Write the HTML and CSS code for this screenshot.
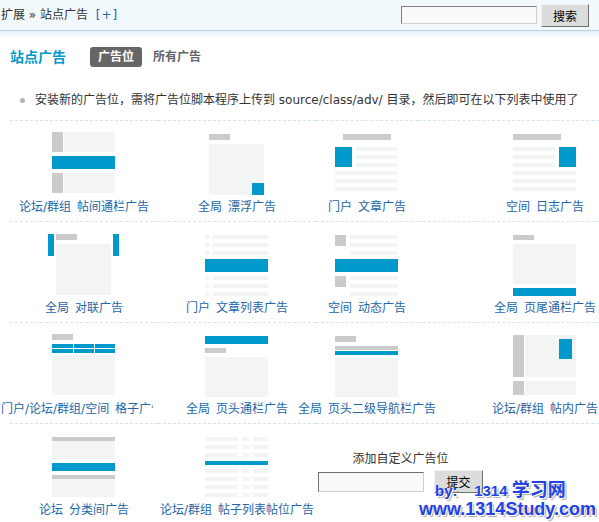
FILE: index.html
```html
<!DOCTYPE html>
<html lang="zh-CN">
<head>
<meta charset="utf-8">
<title>站点广告</title>
<link rel="stylesheet" href="styles.css">
</head>
<body>
<div class="topbar">
  <div class="crumb">扩展 » 站点广告 <a class="crumb-add">[+]</a></div>
  <form class="search">
    <input class="search-input" type="text">
    <button class="search-btn" type="button">搜索</button>
  </form>
</div>
<div class="topshade"></div>
<div class="main">
  <div class="head">
    <h3 class="title">站点广告</h3>
    <ul class="tabs">
      <li class="tab tab-current">广告位</li>
      <li class="tab">所有广告</li>
    </ul>
  </div>
  <ul class="tips">
    <li>安装新的广告位，需将广告位脚本程序上传到 source/class/adv/ 目录，然后即可在以下列表中使用了</li>
  </ul>
  <div class="types">
    <!-- row 1 -->
    <div class="cell">
      <svg class="icon" viewBox="-4 0 72 64"><rect class="g" x="0" y="0" width="11" height="20"/><rect class="l" x="12" y="0" width="51" height="20"/><rect class="b" x="0" y="24" width="63" height="13"/><rect class="g" x="0" y="41" width="11" height="20"/><rect class="l" x="12" y="41" width="51" height="20"/></svg>
      <a class="label">论坛/群组 帖间通栏广告</a>
    </div>
    <div class="cell">
      <svg class="icon" viewBox="-4 0 72 64"><rect class="g" x="4" y="2" width="21" height="6"/><rect class="l" x="4" y="12" width="55" height="51"/><rect class="b" x="47" y="51" width="12" height="12"/></svg>
      <a class="label">全局 漂浮广告</a>
    </div>
    <div class="cell">
      <svg class="icon" viewBox="-4 0 72 64"><rect class="g" x="8" y="2" width="48" height="6"/><rect class="b" x="0" y="15" width="17" height="20"/><rect class="l" x="21" y="15" width="42" height="4"/><rect class="l" x="21" y="23" width="42" height="4"/><rect class="l" x="21" y="31" width="42" height="4"/><rect class="l" x="0" y="39" width="63" height="4"/><rect class="l" x="0" y="47" width="63" height="4"/><rect class="l" x="0" y="55" width="63" height="4"/></svg>
      <a class="label">门户 文章广告</a>
    </div>
    <div class="cell cell-end">
      <svg class="icon" viewBox="-4 0 72 64"><rect class="g" x="0" y="2" width="48" height="6"/><rect class="l" x="0" y="15" width="42" height="4"/><rect class="l" x="0" y="23" width="42" height="4"/><rect class="l" x="0" y="31" width="42" height="4"/><rect class="b" x="46" y="15" width="17" height="20"/><rect class="l" x="0" y="39" width="63" height="4"/><rect class="l" x="0" y="47" width="63" height="4"/><rect class="l" x="0" y="55" width="63" height="4"/></svg>
      <a class="label">空间 日志广告</a>
    </div>
    <!-- row 2 -->
    <div class="cell">
      <svg class="icon" viewBox="-4 0 72 64"><rect class="b" x="-4" y="1" width="6" height="22"/><rect class="g" x="4" y="1" width="21" height="6"/><rect class="l" x="4" y="11" width="55" height="51"/><rect class="b" x="61" y="1" width="6" height="22"/></svg>
      <a class="label">全局 对联广告</a>
    </div>
    <div class="cell">
      <svg class="icon" viewBox="-4 0 72 64"><rect class="l" x="0" y="2" width="4" height="4"/><rect class="l" x="8" y="2" width="55" height="4"/><rect class="l" x="0" y="10" width="4" height="4"/><rect class="l" x="8" y="10" width="55" height="4"/><rect class="l" x="0" y="18" width="4" height="4"/><rect class="l" x="8" y="18" width="55" height="4"/><rect class="b" x="0" y="26" width="63" height="13"/><rect class="l" x="0" y="43" width="4" height="4"/><rect class="l" x="8" y="43" width="55" height="4"/><rect class="l" x="0" y="51" width="4" height="4"/><rect class="l" x="8" y="51" width="55" height="4"/><rect class="l" x="0" y="59" width="4" height="4"/><rect class="l" x="8" y="59" width="55" height="4"/></svg>
      <a class="label">门户 文章列表广告</a>
    </div>
    <div class="cell">
      <svg class="icon" viewBox="-4 0 72 64"><rect class="g" x="0" y="2" width="11" height="11"/><rect class="l" x="15" y="2" width="48" height="4"/><rect class="l" x="15" y="10" width="48" height="4"/><rect class="l" x="15" y="18" width="48" height="4"/><rect class="b" x="0" y="26" width="63" height="13"/><rect class="g" x="0" y="43" width="11" height="11"/><rect class="l" x="15" y="43" width="48" height="4"/><rect class="l" x="15" y="51" width="48" height="4"/><rect class="l" x="15" y="59" width="48" height="4"/></svg>
      <a class="label">空间 动态广告</a>
    </div>
    <div class="cell cell-end">
      <svg class="icon" viewBox="-4 0 72 64"><rect class="g" x="0" y="2" width="21" height="5"/><rect class="l" x="0" y="11" width="63" height="40"/><rect class="b" x="0" y="55" width="63" height="8"/></svg>
      <a class="label">全局 页尾通栏广告</a>
    </div>
    <!-- row 3 -->
    <div class="cell">
      <svg class="icon" viewBox="-4 0 72 64"><rect class="g" x="0" y="0" width="21" height="6"/><rect class="b" x="0" y="10" width="21" height="4"/><rect class="b" x="22" y="10" width="20" height="4"/><rect class="b" x="43" y="10" width="20" height="4"/><rect class="b" x="0" y="15" width="21" height="4"/><rect class="b" x="22" y="15" width="20" height="4"/><rect class="b" x="43" y="15" width="20" height="4"/><rect class="l" x="0" y="22" width="63" height="39"/></svg>
      <a class="label label-clip">门户/论坛/群组/空间 格子广告</a>
    </div>
    <div class="cell">
      <svg class="icon" viewBox="-4 0 72 64"><rect class="b" x="0" y="2" width="63" height="8"/><rect class="g" x="0" y="14" width="21" height="5"/><rect class="l" x="0" y="23" width="63" height="40"/></svg>
      <a class="label">全局 页头通栏广告</a>
    </div>
    <div class="cell">
      <svg class="icon" viewBox="-4 0 72 64"><rect class="g" x="0" y="2" width="21" height="6"/><rect class="g" x="0" y="12" width="63" height="4"/><rect class="b" x="0" y="17" width="63" height="4"/><rect class="l" x="0" y="24" width="63" height="39"/></svg>
      <a class="label">全局 页头二级导航栏广告</a>
    </div>
    <div class="cell cell-end">
      <svg class="icon" viewBox="-4 0 72 64"><rect class="g" x="0" y="1" width="11" height="42"/><rect class="l" x="12" y="1" width="51" height="42"/><rect class="b" x="46" y="5" width="13" height="20"/><rect class="g" x="0" y="47" width="11" height="14"/><rect class="l" x="12" y="47" width="51" height="14"/></svg>
      <a class="label">论坛/群组 帖内广告</a>
    </div>
    <!-- row 4 -->
    <div class="cell">
      <svg class="icon" viewBox="-4 0 72 64"><rect class="g" x="0" y="2" width="63" height="4"/><rect class="l" x="0" y="6" width="63" height="18"/><rect class="b" x="0" y="28" width="63" height="8"/><rect class="g" x="0" y="40" width="63" height="4"/><rect class="l" x="0" y="44" width="63" height="18"/></svg>
      <a class="label">论坛 分类间广告</a>
    </div>
    <div class="cell">
      <svg class="icon" viewBox="-4 0 72 64"><rect class="l" x="0" y="2" width="33" height="4"/><rect class="l" x="37" y="2" width="7" height="4"/><rect class="l" x="48" y="2" width="15" height="4"/><rect class="l" x="0" y="10" width="33" height="4"/><rect class="l" x="37" y="10" width="7" height="4"/><rect class="l" x="48" y="10" width="15" height="4"/><rect class="l" x="0" y="18" width="33" height="4"/><rect class="l" x="37" y="18" width="7" height="4"/><rect class="l" x="48" y="18" width="15" height="4"/><rect class="b" x="0" y="26" width="63" height="4"/><rect class="l" x="0" y="34" width="33" height="4"/><rect class="l" x="37" y="34" width="7" height="4"/><rect class="l" x="48" y="34" width="15" height="4"/><rect class="l" x="0" y="42" width="33" height="4"/><rect class="l" x="37" y="42" width="7" height="4"/><rect class="l" x="48" y="42" width="15" height="4"/><rect class="l" x="0" y="50" width="33" height="4"/><rect class="l" x="37" y="50" width="7" height="4"/><rect class="l" x="48" y="50" width="15" height="4"/><rect class="l" x="0" y="58" width="33" height="4"/><rect class="l" x="37" y="58" width="7" height="4"/><rect class="l" x="48" y="58" width="15" height="4"/></svg>
      <a class="label">论坛/群组 帖子列表帖位广告</a>
    </div>
    <div class="cell cell-form">
      <form class="custom">
        <div class="custom-title">添加自定义广告位</div>
        <div class="custom-row">
          <input class="custom-input" type="text">
          <button class="custom-btn" type="button">提交</button>
        </div>
      </form>
    </div>
  </div>
</div>
<div class="watermark">
  <div class="wm-line1"><span class="wm-latin">by:&nbsp;&nbsp;&nbsp; 1314 </span>学习网</div>
  <div class="wm-line2">www.1314Study.com</div>
</div>
</body>
</html>
```

FILE: styles.css
```css
* { box-sizing: border-box; }
html, body { margin: 0; padding: 0; background: #fff; }
body {
  width: 599px;
  height: 522px;
  overflow: hidden;
  position: relative;
  font: 12px/1.5 "DejaVu Sans", "Noto Sans CJK SC", sans-serif;
  color: #333;
}

/* top bar */
.topbar {
  height: 31px;
  background: #f2f9fd;
  border-bottom: 1px solid #b7d2dc;
  display: flex;
  align-items: center;
  justify-content: space-between;
  padding: 0 10px 0 1px;
}
.crumb { color: #333; white-space: nowrap; }
.crumb-add { color: #2366a8; margin-left: 4px; letter-spacing: 1px; }
.search { display: flex; align-items: center; gap: 4px; margin: 0; }
.search-input {
  width: 136px; height: 18px; padding: 0;
  border: 1px solid; border-color: #808080 #d0d0d0 #d0d0d0 #808080;
  background: #fafafa;
}
.search-btn {
  width: 48px; height: 23px; padding: 0;
  border: 1px solid; border-color: #f2f2f2 #707070 #707070 #f2f2f2;
  background: #dcdcdc;
  font: 12px/21px "Noto Sans CJK SC", sans-serif;
  color: #000;
}
.topshade { height: 8px; background: linear-gradient(#e7f1f6, #fff); }

/* main */
.main { padding-left: 10px; }
.head { display: flex; align-items: center; height: 20px; margin-top: 8px; }
.title {
  margin: 0; width: 80px;
  font-size: 14px; font-weight: bold; line-height: 20px;
  color: #09c;
}
.tabs { display: flex; gap: 3px; list-style: none; margin: 0; padding: 0; }
.tab { padding: 0 8px; line-height: 20px; font-weight: bold; color: #666; border-radius: 3px; }
.tab-current { background: #666; color: #fff; }

.tips { list-style: none; margin: 23px 0 0; padding: 0 0 0 10px; line-height: 20px; white-space: nowrap; }
.tips li::before {
  content: ""; display: inline-block;
  width: 5px; height: 5px; border-radius: 50%;
  background: #b3b3b3; margin-right: 10px; vertical-align: middle;
}

/* ad type grid */
.types {
  display: grid;
  grid-template-columns: 148px 158px 102px 1fr;
  margin-top: 10px;
}
.cell {
  border-top: 1px dashed #d4e6f4;
  padding: 11px 0 6px;
  display: flex;
  flex-direction: column;
  align-items: center;
}
.cell-end { padding-left: 73px; }
.icon { display: block; width: 72px; height: 64px; }
.g { fill: #cbcbcb; }
.l { fill: #f3f4f4; }
.b { fill: #0099cc; }
.label {
  margin-top: 3px; line-height: 16px;
  color: #2366a8; white-space: nowrap; word-spacing: 2px;
}
.label-clip {
  align-self: flex-start;
  margin-left: -9px;
  width: 152px;
  overflow: hidden;
}

.cell-form { grid-column: span 2; align-items: flex-start; padding-top: 27px; }
.custom { display: flex; flex-direction: column; align-items: center; gap: 3px; margin: 0 0 0 2px; }
.custom-title { line-height: 16px; color: #333; }
.custom-row { display: flex; align-items: center; gap: 10px; }
.custom-input {
  width: 106px; height: 20px; padding: 0;
  border: 1px solid; border-color: #6f6f6f #cfcfcf #cfcfcf #6f6f6f;
  background: #fafafa;
}
.custom-btn {
  width: 49px; height: 23px; padding: 0;
  border: 1px solid; border-color: #f2f2f2 #707070 #707070 #f2f2f2;
  background: #dcdcdc;
  font: 12px/21px "Noto Sans CJK SC", sans-serif;
  color: #000;
}

/* watermark overlay */
.watermark {
  position: absolute;
  left: 419px;
  top: 481px;
  font: bold 18px/19px "Liberation Sans", "Noto Sans CJK SC", sans-serif;
  color: #2142e4;
  text-shadow: 1px 1px 0 #fff, 2px 2px 1px #aaa;
  white-space: nowrap;
}
.wm-line1 { padding-left: 16px; }
.wm-latin { font-size: 15px; }
```
